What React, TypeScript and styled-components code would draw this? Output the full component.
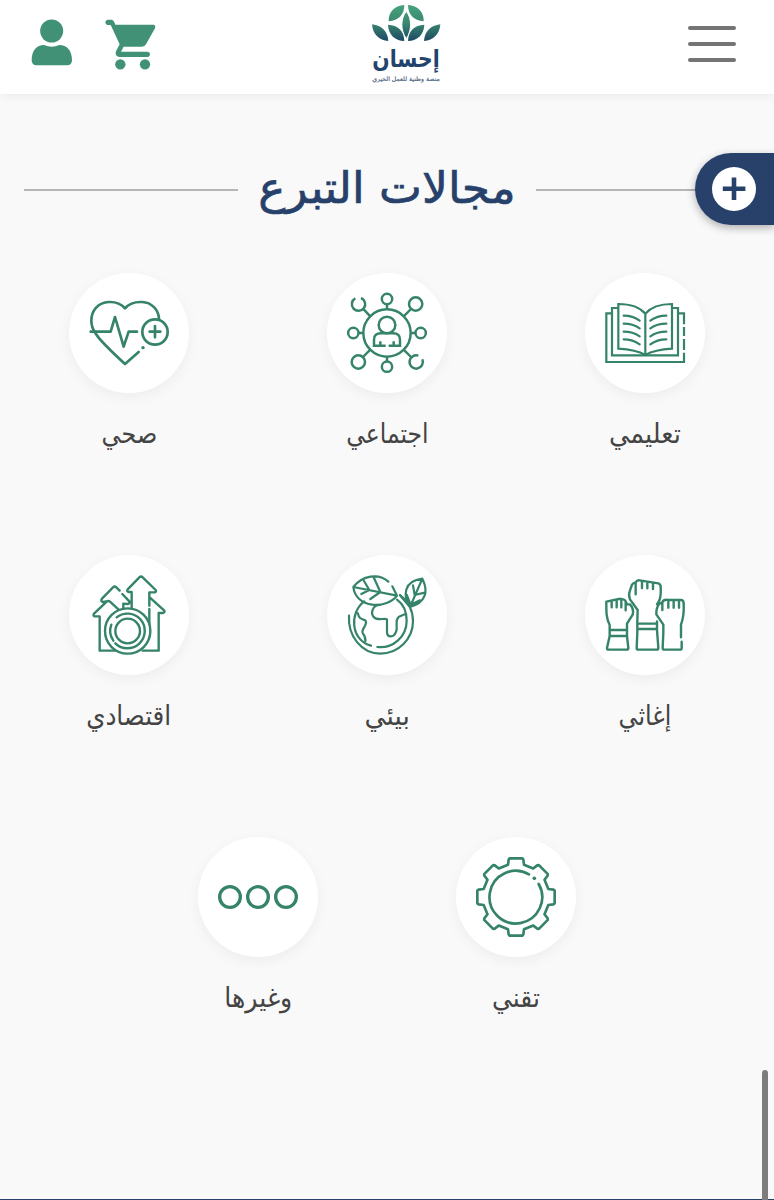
import React from "react";
import styled, { createGlobalStyle } from "styled-components";

const green = "#35836a";
const navy = "#27416b";

const GlobalStyle = createGlobalStyle`
  * { box-sizing: border-box; }
  body { margin: 0; background: #f9f9f9; font-family: "DejaVu Sans", sans-serif; }
`;

const Page = styled.div`
  position: relative;
  display: flex;
  flex-direction: column;
  height: 1200px;
  overflow: hidden;
  background: #f9f9f9;
`;

const Header = styled.header`
  display: flex;
  justify-content: space-between;
  height: 94px;
  flex-shrink: 0;
  background: #fff;
  box-shadow: 0 1px 10px rgba(0, 0, 0, 0.07);
`;

const Actions = styled.div`
  display: flex;
  gap: 33px;
  width: 350px;
  padding: 19px 0 0 31px;
`;

const MenuButton = styled.div`
  display: flex;
  flex-direction: column;
  align-items: flex-end;
  gap: 12px;
  width: 312px;
  padding: 26px 38px 0 0;
`;

const MenuBar = styled.span`
  width: 48px;
  height: 4px;
  border-radius: 2px;
  background: #757575;
`;

const TitleRow = styled.div`
  display: flex;
  align-items: center;
  height: 80px;
  margin-top: 55px;
  padding: 0 24px;
  flex-shrink: 0;
`;

const Rule = styled.span`
  width: 214px;
  height: 2px;
  margin-top: 1px;
  background: #b4b6b8;
`;

const Title = styled.h1`
  flex: 1;
  margin: -3px 0 0;
  text-align: center;
  white-space: nowrap;
  color: ${navy};
  font-size: 44px;
  font-weight: 400;
  line-height: 80px;
  -webkit-text-stroke: 0.7px ${navy};
  transform: scaleX(1.035);
`;

const Categories = styled.main`
  display: flex;
  flex-wrap: wrap;
  justify-content: center;
  align-content: flex-start;
  flex: 1;
  padding-top: 44.4px;
`;

const Category = styled.div`
  display: flex;
  flex-direction: column;
  align-items: center;
  width: 258px;
  height: 282px;
`;

const Disc = styled.div`
  display: flex;
  align-items: center;
  justify-content: center;
  width: 119.6px;
  height: 119.6px;
  border-radius: 50%;
  background: #fff;
  box-shadow: 0 4px 14px rgba(0, 0, 0, 0.05);
`;

const Label = styled.div<{ $stretch: number }>`
  margin-top: 19px;
  height: 44px;
  line-height: 44px;
  font-size: 27px;
  color: #444;
  white-space: nowrap;
  transform: scaleX(${(p) => p.$stretch});
`;

const Footer = styled.footer`
  height: 1.5px;
  flex-shrink: 0;
  background: ${navy};
`;

const DonateTab = styled.div`
  position: absolute;
  top: 153px;
  right: 0;
  display: flex;
  align-items: center;
  width: 79px;
  height: 72px;
  padding-left: 17px;
  border-radius: 36px 0 0 36px;
  background: ${navy};
  box-shadow: 0 3px 9px rgba(0, 0, 0, 0.3);
`;

const ScrollThumb = styled.div`
  position: absolute;
  top: 1070px;
  right: 6px;
  width: 6px;
  height: 140px;
  border-radius: 3px;
  background: #7d7d7d;
`;

const IconSvg = styled.svg<{ $stroke?: number; $sharp?: boolean }>`
  width: 80px;
  height: 80px;
  overflow: visible;
  fill: none;
  stroke: ${green};
  stroke-width: ${(p) => p.$stroke ?? 8};
  stroke-linecap: ${(p) => (p.$sharp ? "butt" : "round")};
  stroke-linejoin: ${(p) => (p.$sharp ? "miter" : "round")};
`;

const Book = () => (
  <IconSvg viewBox="90 85 240 240" $stroke={6.6} $sharp>
    <path d="M211 147C194 127 162 118 130 118V252C164 254 190 259 211 271C232 259 258 254 291 252V118C260 118 228 127 211 147V271" />
    <path d="M130 130H111V272H309V130H291M111 146H94V292H327V264M309 146H327V179M327 187V214M327 223V256" />
    <path strokeLinecap="round" d="M146 153Q174 153 194 168M146 177Q174 177 194 191M146 201Q174 201 194 215M146 224Q174 224 194 239M274 153Q246 153 226 168M274 177Q246 177 226 191M274 201Q246 201 226 215M274 224Q246 224 226 239" />
  </IconSvg>
);

const Network = () => (
  <IconSvg viewBox="90 85 240 240" $stroke={7.4} $sharp>
    <circle cx="210" cy="205" r="71" />
    <circle cx="210" cy="103" r="15.5" />
    <circle cx="210" cy="306" r="15.5" />
    <circle cx="109" cy="205" r="15.5" />
    <circle cx="311" cy="205" r="15.5" />
    <circle cx="296" cy="118" r="20" />
    <circle cx="124" cy="292" r="20" />
    <path d="M115 101A20 20 0 1 0 132 100M304 273A20 20 0 1 0 316 284" />
    <path d="M210 119V134M210 276V290M125 205H139M281 205H295M282 133L260 155M138 277L160 255M138 132L160 155M282 277L260 255" />
    <circle cx="210" cy="181" r="25" />
    <path d="M206 243H171V225Q171 206 192 206H228Q249 206 249 225V243H215M190 230V243M230 230V243" />
  </IconSvg>
);

const Heart = () => (
  <IconSvg viewBox="87 85 240 240" $stroke={8}>
    <path d="M297 164C297 137 276 113 246 112C224 111 207 117 195 131C183 117 166 111 146 112C115 113 94 137 94 168C94 184 99 196 108 208Q122 231 195 298L236 262" />
    <path d="M92 201H152L165 157L191 246L206 201H231M269 201H301M285 184V218" />
    <circle cx="285" cy="202" r="38" />
    <circle cx="249" cy="249" r="5" fill={green} stroke="none" />
  </IconSvg>
);

const Fists = () => (
  <IconSvg viewBox="90 90 240 240" $stroke={7.2}>
    <path d="M94 170L132 162Q144 160 151 167L156 178H165C172 185 176 197 173 209L156 236V273L160 309Q160 314 155 314H101Q96 314 96 309L104 273V240C93 218 94 200 94 170ZM110 168V187M125 165V187M139 162V187M152 171V196M104 255H156M104 273H156" />
    <path d="M187 229V262L185 309Q185 314 190 314H245Q250 314 250 309L246 255V229M187 229L188 195L165 163Q160 149 164 139L171 119Q176 112 182 112V148M182 112Q186 105 194 106L250 115Q257 117 257 126C258 145 259 157 251 170L246 178M201 108V129M217 111V130M234 114V132M187 236H246M187 252H246" />
    <path d="M262 172L253 176Q243 188 244 208L265 239V262L263 309Q263 314 268 314H315Q320 314 320 309V290M262 195V172Q266 162 281 165H319Q326 166 326 176C327 196 327 216 318 239V277M280 166V188M296 167V188M312 167V188" />
  </IconSvg>
);

const Earth = () => (
  <IconSvg viewBox="90 90 240 240" $stroke={6.6}>
    <path d="M96 212C92 272 133 326 190 326C243 326 288 283 288 229C288 196 272 168 249 150M142 169C96 202 101 287 162 302M181 306C227 311 269 276 269 227C269 200 258 177 240 164" />
    <path d="M109 126C136 92 185 83 214 110M226 124L240 152M109 126C112 155 134 175 166 179C196 182 226 171 240 152L109 126M141 108L157 135L133 147M171 99L190 141L160 162" />
    <path d="M279 186C258 154 258 108 316 101C336 140 325 174 279 186ZM279 186L316 101M288 121L293 150L323 143M269 149L281 179L309 166M279 186L249 151" />
    <path d="M189 180C165 180 161 205 170 216C180 229 203 218 210 223V262C211 279 230 277 236 263C246 245 230 229 246 215L263 208M122 204C126 219 130 222 145 226C155 240 129 252 138 266C147 276 145 285 145 289" />
  </IconSvg>
);

const Economy = () => (
  <IconSvg viewBox="87 91 240 240" $stroke={7.2}>
    <circle cx="203" cy="259" r="68" />
    <circle cx="203" cy="259" r="37" />
    <path d="M154 240A52 52 0 0 0 160 288M170 218A52 52 0 1 1 166 296" />
    <path d="M164 318H119V215H103Q98 212 103 206L140 171Q145 167 150 171L176 195M179 138L169 128Q164 123 159 128L126 162Q121 169 128 172L140 170M187 148L208 170Q210 177 203 178L190 177V190M215 190V142H206Q199 141 203 134L238 98Q243 93 248 98L287 136Q290 142 283 143H268V183M268 193V238M269 158L313 198Q315 204 309 205H296V318H248" />
  </IconSvg>
);

const toothProfile = [
  [-24, -97],
  [-22, -112],
  [-19, -116],
  [19, -116],
  [22, -112],
  [24, -97],
];
const gearPoints = Array.from({ length: 8 }, (_, tooth) => {
  const angle = (tooth * Math.PI) / 4;
  return toothProfile
    .map(([x, y]) => `${x * Math.cos(angle) - y * Math.sin(angle)},${x * Math.sin(angle) + y * Math.cos(angle)}`)
    .join(" ");
}).join(" ");

const Gear = () => (
  <IconSvg viewBox="-120 -120 240 240" $stroke={8}>
    <polygon points={gearPoints} />
    <path d="M39 -68A79 79 0 1 0 68 -39" />
    <circle cx="55" cy="-56" r="5.5" fill={green} stroke="none" />
  </IconSvg>
);

const Others = () => (
  <IconSvg viewBox="-120 -120 240 240" $stroke={10}>
    <circle cx="-84" cy="0" r="31" />
    <circle r="31" />
    <circle cx="84" cy="0" r="31" />
  </IconSvg>
);

const UserIcon = () => (
  <svg width="41" height="48" viewBox="93 57 123 144" fill="#419176">
    <circle cx="155" cy="93" r="34.5" />
    <path d="M95 181C95 151 110 135 132 135Q155 145 178 135C201 135 216 151 216 181Q216 196 201 196H110Q95 196 95 181Z" />
  </svg>
);

const CartIcon = () => (
  <svg width="51" height="53" viewBox="314 57 153 159" fill="#419176">
    <path d="M345 74H460Q467 76 464 85L437 133Q433 140 425 140H370L362 155H443Q449 157 449 163Q449 170 443 171H357Q342 168 347 154L358 133L331 75H321Q315 73 315 67Q316 60 322 59H334Q341 60 345 74Z" />
    <circle cx="360" cy="193" r="15.5" />
    <circle cx="434" cy="193" r="15.5" />
  </svg>
);

const Logo = () => (
  <svg width="112" height="94" viewBox="0 0 336 282">
    <defs>
      <linearGradient id="leaf" gradientUnits="userSpaceOnUse" x1="0" y1="15" x2="0" y2="125">
        <stop offset="0" stopColor="#46a27d" />
        <stop offset="0.5" stopColor="#39876f" />
        <stop offset="1" stopColor="#1d4663" />
      </linearGradient>
    </defs>
    <g fill="url(#leaf)">
      <path d="M116 64C115 36 133 17 163 15C163 43 146 62 116 64Z" />
      <path d="M221 64C222 36 204 17 174 15C174 43 191 62 221 64Z" />
      <path d="M169 34C186 56 186 91 169 116C151 91 151 56 169 34Z" stroke="#fff" strokeWidth="3" />
      <path d="M114 74C144 75 162 93 163 123C134 122 115 103 114 74Z" />
      <path d="M223 74C193 75 175 93 174 123C203 122 222 103 223 74Z" />
      <path d="M66 73C96 77 113 94 115 123C87 121 68 103 66 73Z" />
      <path d="M271 73C241 77 224 94 222 123C250 121 269 103 271 73Z" />
    </g>
    <text x="168" y="200" direction="rtl" textAnchor="middle" fill="#22436b" fontSize="72" fontWeight="700" textLength="202" lengthAdjust="spacingAndGlyphs">إحسان</text>
    <text x="168" y="242" direction="rtl" textAnchor="middle" fill="#4a6480" stroke="#4a6480" strokeWidth="0.5" fontSize="18" textLength="203" lengthAdjust="spacingAndGlyphs">منصة وطنية للعمل الخيري</text>
  </svg>
);

const PlusIcon = () => (
  <svg width="44" height="44" viewBox="0 0 44 44">
    <circle cx="22" cy="22" r="22" fill="#fff" />
    <path d="M22 10.5V33M10.8 21.8H33.4" stroke={navy} strokeWidth="4.6" />
  </svg>
);

const categories = [
  { label: "تعليمي", stretch: 0.95, icon: <Book /> },
  { label: "اجتماعي", stretch: 0.87, icon: <Network /> },
  { label: "صحي", stretch: 0.885, icon: <Heart /> },
  { label: "إغاثي", stretch: 0.88, icon: <Fists /> },
  { label: "بيئي", stretch: 0.98, icon: <Earth /> },
  { label: "اقتصادي", stretch: 0.91, icon: <Economy /> },
  { label: "تقني", stretch: 0.925, icon: <Gear /> },
  { label: "وغيرها", stretch: 0.935, icon: <Others /> },
];

export default function App() {
  return (
    <Page>
      <GlobalStyle />
      <Header>
        <Actions>
          <UserIcon />
          <CartIcon />
        </Actions>
        <Logo />
        <MenuButton>
          <MenuBar />
          <MenuBar />
          <MenuBar />
        </MenuButton>
      </Header>
      <TitleRow>
        <Rule />
        <Title dir="rtl">مجالات التبرع</Title>
        <Rule />
      </TitleRow>
      <Categories dir="rtl">
        {categories.map((c) => (
          <Category key={c.label}>
            <Disc>{c.icon}</Disc>
            <Label $stretch={c.stretch}>{c.label}</Label>
          </Category>
        ))}
      </Categories>
      <Footer />
      <DonateTab>
        <PlusIcon />
      </DonateTab>
      <ScrollThumb />
    </Page>
  );
}
